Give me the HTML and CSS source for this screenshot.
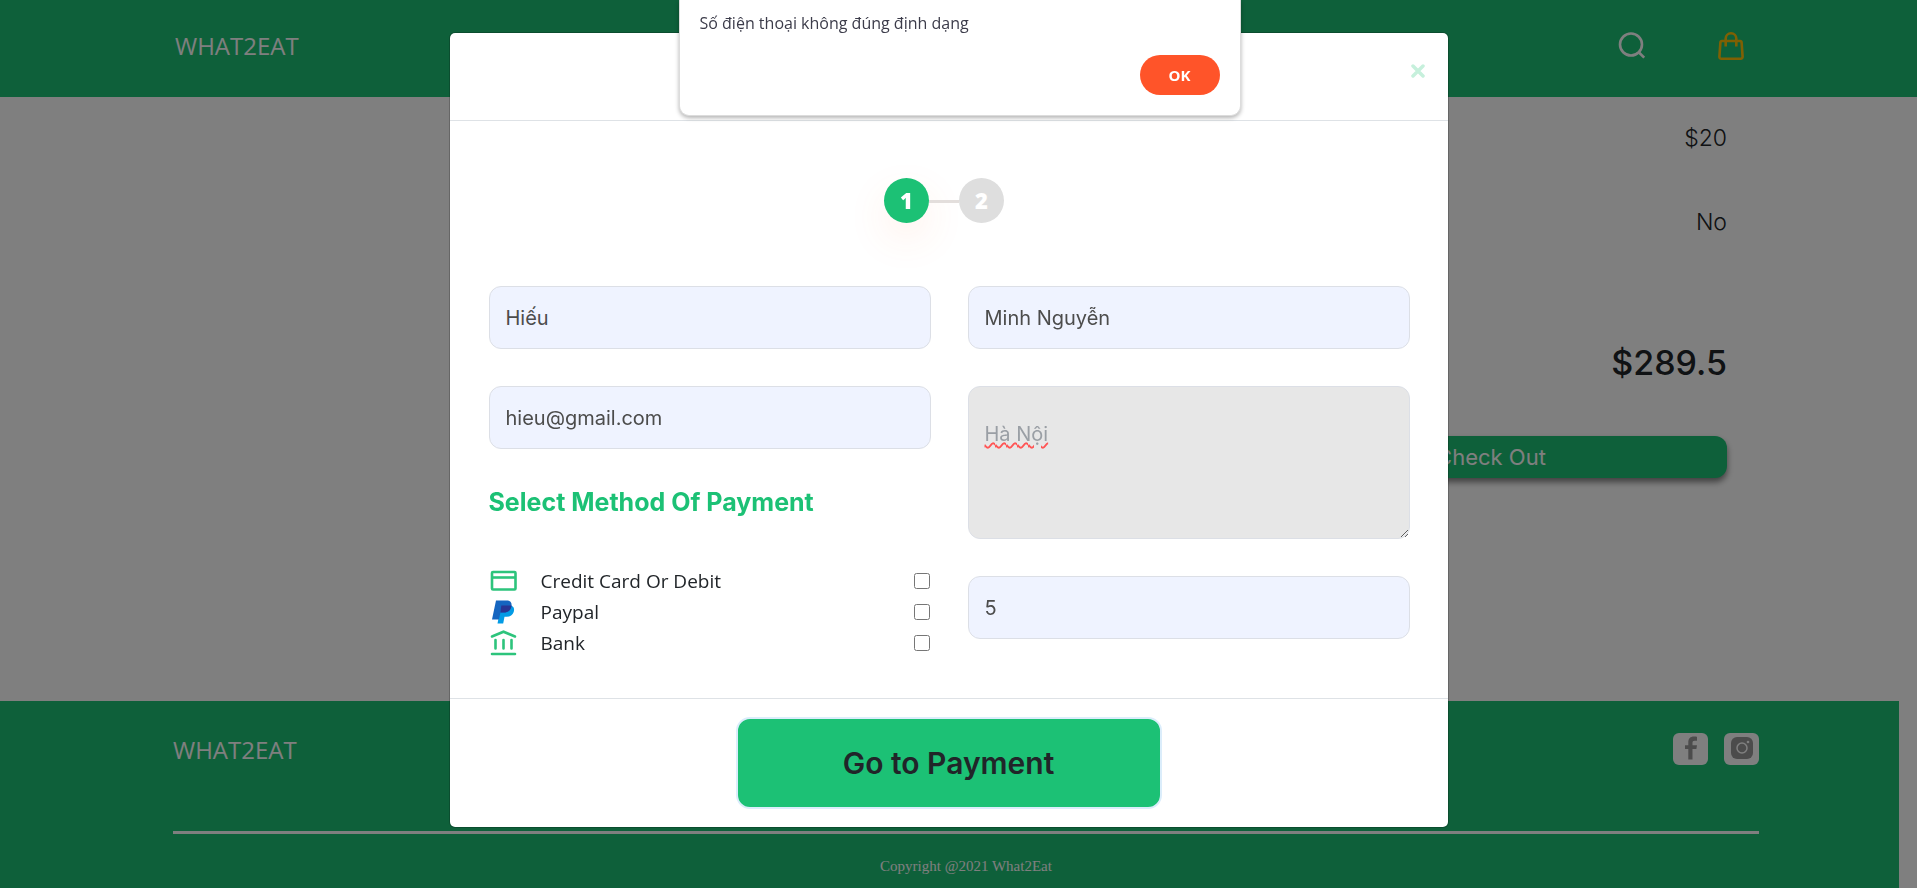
FILE: index.html
```html
<!DOCTYPE html>
<html lang="vi">
<head>
<meta charset="utf-8">
<meta name="viewport" content="width=device-width, initial-scale=1">
<title>WHAT2EAT</title>
<link rel="stylesheet" href="styles.css">
</head>
<body>
<header class="site-header">
  <a class="brand" href="#">WHAT2EAT</a>
  <nav class="site-actions" aria-label="Site">
    <button class="icon-button" type="button" aria-label="Search">
      <svg width="28" height="28" viewBox="0 0 28 28" fill="none" stroke="currentColor" stroke-width="2.600"><circle cx="13" cy="12.500" r="11"/><path d="M20.500 20l5.700 5.700"/></svg>
    </button>
    <button class="icon-button icon-button-cart" type="button" aria-label="Cart">
      <svg width="26" height="28" viewBox="0 0 26 28" fill="none" stroke="currentColor" stroke-width="2.600" stroke-linejoin="round"><path d="M4 9h18a1.600 1.600 0 0 1 1.600 1.500l1 14.200a1.900 1.900 0 0 1-1.900 2H3.300a1.900 1.900 0 0 1-1.900-2l1-14.200A1.600 1.600 0 0 1 4 9z"/><path d="M7.700 14.500V6.600a5.300 5.300 0 0 1 10.600 0v7.900"/></svg>
    </button>
  </nav>
</header>

<main class="cart">
  <section class="summary">
    <p class="summary-value">$20</p>
    <p class="summary-value">No</p>
    <p class="summary-total">$289.5</p>
    <button class="checkout" type="button">Check Out</button>
  </section>
</main>

<footer class="site-footer">
  <div class="footer-top">
    <a class="brand" href="#">WHAT2EAT</a>
    <div class="social">
      <a class="social-link" href="#" aria-label="Facebook">
        <svg width="24" height="24" viewBox="0 0 24 24" fill="currentColor"><path d="M18 .8v4h-2.300c-1.700 0-2.200.8-2.200 2.200v2.200H18l-.6 3.900h-3.900V23.500H9.300V13.100H6V9.200h3.300V6.300C9.300 2.700 11.400.6 14.800.6c1.500 0 2.700.1 3.200.2z"/></svg>
      </a>
      <a class="social-link" href="#" aria-label="Instagram">
        <svg width="24" height="24" viewBox="0 0 24 24"><rect x="1" y="1" width="22" height="22" rx="6" fill="currentColor"/><circle cx="12" cy="12" r="5" fill="none" stroke="#fff" stroke-width="1.500"/><circle cx="18" cy="6" r="1.300" fill="#fff"/></svg>
      </a>
    </div>
  </div>
  <p class="copyright">Copyright @2021 What2Eat</p>
</footer>

<div class="backdrop">
  <form class="modal" role="dialog" aria-modal="true" aria-label="Payment">
    <div class="modal-header">
      <button class="close" type="button" aria-label="Close">
        <svg width="14" height="14" viewBox="0 0 14 14" fill="none" stroke="currentColor" stroke-width="3.500" stroke-linecap="round"><path d="M2 2l10 10M12 2L2 12"/></svg>
      </button>
    </div>
    <div class="modal-body">
      <ol class="steps">
        <li class="step step-active">1</li>
        <li class="step">2</li>
      </ol>
      <div class="form-grid">
        <div class="column">
          <input class="field" type="text" value="Hiếu" aria-label="First name">
          <input class="field" type="email" value="hieu@gmail.com" aria-label="Email">
          <fieldset class="methods">
            <legend class="methods-title">Select Method Of Payment</legend>
            <label class="method">
              <svg class="method-icon" width="28" height="28" viewBox="0 0 28 28" fill="none" stroke="#2dc47c" stroke-width="2.600"><rect x="3" y="5" width="23.500" height="17.500" rx="1"/><path d="M3 10.500h23.500"/></svg>
              <span class="method-name">Credit Card Or Debit</span>
              <input class="method-check" type="checkbox">
            </label>
            <label class="method">
              <svg class="method-icon" width="28" height="28" viewBox="0 0 28 28"><path fill="#039be5" d="M22 7.500c3.200 1.200 3.600 3.800 2.700 6.500-1 3.200-3.600 4.700-7 4.700h-2.200L14.200 25.500H8.500L12 8z"/><path fill="#1565c0" d="M7 2.500h10.500c3.500 0 5.600 1.800 5 5.500-.7 4.300-3.500 6.500-7.700 6.500h-3.300L9.900 21.500H3z"/><path fill="#283593" d="M12.300 7.500h10.200c-.4 4.600-3.300 7-7.700 7h-3.300z"/></svg>
              <span class="method-name">Paypal</span>
              <input class="method-check" type="checkbox">
            </label>
            <label class="method">
              <svg class="method-icon" width="28" height="28" viewBox="0 0 28 28" fill="none" stroke="#2dc47c" stroke-width="2.600" stroke-linecap="round"><path d="M3 7.500l11.500-4.800L26 7.500M6.500 11v8.500M14.500 11v8.500M22.500 11v8.500M3 25h23"/></svg>
              <span class="method-name">Bank</span>
              <input class="method-check" type="checkbox">
            </label>
          </fieldset>
        </div>
        <div class="column">
          <input class="field" type="text" value="Minh Nguyễn" aria-label="Last name">
          <textarea class="field field-area" aria-label="Address">Hà Nội</textarea>
          <input class="field" type="text" value="5" aria-label="Phone number">
        </div>
      </div>
    </div>
    <div class="modal-footer">
      <button class="submit" type="submit">Go to Payment</button>
    </div>
  </form>
</div>

<div class="alert" role="alertdialog" aria-labelledby="alert-text">
  <p class="alert-text" id="alert-text">Số điện thoại không đúng định dạng</p>
  <button class="alert-ok" type="button">OK</button>
</div>
</body>
</html>
```

FILE: styles.css
```css
:root {
  --green: #1cc175;
  --ui: "Open Sans", "Noto Sans", sans-serif;
  --display: Inter, "Noto Sans", sans-serif;
}

* {
  box-sizing: border-box;
}

body {
  margin: 0;
  min-height: 100vh;
  display: flex;
  flex-direction: column;
  background: #fff;
  color: #212529;
  font-family: var(--ui);
}

p,
ol {
  margin: 0;
  padding: 0;
}

button {
  border: 0;
  padding: 0;
  font: inherit;
  cursor: pointer;
}

svg {
  display: block;
}

.brand {
  color: #fff;
  font-size: 24px;
  line-height: 34px;
  text-decoration: none;
}

/* Site header */
.site-header {
  display: flex;
  align-items: center;
  justify-content: space-between;
  height: 97px;
  padding: 0 173px 6px 175px;
  background: var(--green);
}

.site-actions {
  display: flex;
  gap: 72px;
}

.icon-button {
  background: none;
  color: #fff;
}

.icon-button-cart {
  color: #ffc107;
}

/* Cart summary */
.cart {
  flex: 1;
  display: flex;
  justify-content: flex-end;
  padding: 25px 190px;
}

.summary {
  display: flex;
  flex-direction: column;
  width: 472px;
  text-align: right;
  font-family: var(--display);
}

.summary-value {
  margin-bottom: 52px;
  font-size: 23px;
  font-weight: 300;
  line-height: 32px;
}

.summary-total {
  margin: 49px 0;
  font-size: 34px;
  font-weight: 500;
  line-height: 48px;
}

.checkout {
  height: 42px;
  border-radius: 12px;
  background: var(--green);
  box-shadow: 0 4px 6px rgba(0, 0, 0, 0.5);
  color: #fff;
  font-size: 22px;
}

/* Site footer */
.site-footer {
  margin-right: 18px;
  padding: 32px 140px 10px 173px;
  background: var(--green);
}

.footer-top {
  display: flex;
  justify-content: space-between;
  align-items: flex-start;
  height: 101px;
  border-bottom: 3px solid #fff;
}

.social {
  display: flex;
  gap: 16px;
}

.social-link {
  display: flex;
  justify-content: center;
  width: 35px;
  height: 32px;
  padding-top: 3px;
  border-radius: 6px;
  background: #fff;
  color: #999;
}

.copyright {
  padding-top: 20px;
  color: #fff;
  font-family: "Liberation Serif", serif;
  font-size: 15px;
  line-height: 24px;
  text-align: center;
}

/* Payment dialog */
.backdrop {
  position: fixed;
  inset: 0;
  padding: 32px 20px 0 0;
  background: rgba(0, 0, 0, 0.5);
  overflow: auto;
}

.modal {
  width: 100%;
  max-width: 1000px;
  margin: 0 auto;
  border: 1px solid rgba(0, 0, 0, 0.2);
  border-radius: 6px;
  background: #fff;
  background-clip: padding-box;
}

.modal-header {
  display: flex;
  justify-content: flex-end;
  height: 88px;
  padding: 31px 23px;
  border-bottom: 1px solid #dee2e6;
}

.close {
  height: 14px;
  background: none;
  color: #c6f0dc;
}

.modal-body {
  padding: 57px 38px 40px 39px;
}

.steps {
  display: flex;
  justify-content: center;
  gap: 30px;
  padding-right: 10px;
  list-style: none;
}

.step {
  position: relative;
  width: 45px;
  border-radius: 50%;
  background: #dedede;
  color: #fff;
  font-size: 22px;
  font-weight: 800;
  line-height: 45px;
  text-align: center;
}

.step-active {
  background: var(--green);
  box-shadow: 0 16px 40px rgba(255, 110, 50, 0.1);
}

.step + .step::before {
  content: "";
  position: absolute;
  top: 22px;
  right: 100%;
  width: 30px;
  height: 3px;
  background: #e3dedc;
}

.form-grid {
  display: grid;
  grid-template-columns: 1fr 1fr;
  gap: 37px;
  padding-top: 63px;
}

.column {
  display: flex;
  flex-direction: column;
  gap: 37px;
}

.field {
  width: 100%;
  height: 63px;
  padding: 0 16px;
  border: 1px solid #dcdfe6;
  border-radius: 12px;
  background: #eff3ff;
  color: #4c4c4c;
  font-family: var(--display);
  font-size: 20px;
}

.field-area {
  height: 153px;
  padding: 32px 16px;
  background: #e7e7e7;
  color: #9a9fa5;
  line-height: 30px;
  resize: vertical;
  text-decoration: underline wavy #f55 2px;
}

.methods {
  min-width: 0;
  margin: 0;
  padding: 0;
  border: 0;
}

.methods-title {
  padding: 0 0 47px;
  color: var(--green);
  font-family: var(--display);
  font-size: 25px;
  font-weight: 700;
  line-height: 32px;
}

.method {
  display: flex;
  align-items: center;
  height: 31px;
}

.method-icon {
  margin-right: 24px;
}

.method-name {
  flex: 1;
  font-size: 19px;
  line-height: 30px;
}

.method-check {
  width: 16px;
  height: 16px;
  margin: 0 1px;
}

.modal-footer {
  display: flex;
  justify-content: center;
  padding: 18px;
  border-top: 1px solid #dee2e6;
}

.submit {
  width: 426px;
  height: 92px;
  border: 2px solid #dbedfb;
  border-radius: 14px;
  background: var(--green);
  color: #212529;
  font-family: var(--display);
  font-size: 30px;
  font-weight: 600;
}

/* Browser alert */
.alert {
  position: fixed;
  top: 0;
  left: 50%;
  display: flex;
  flex-direction: column;
  align-items: flex-end;
  width: 562px;
  margin-left: -280px;
  padding: 11px 20px 20px;
  border: 1px solid #dcdcdc;
  border-top: 0;
  border-radius: 0 0 10px 10px;
  background: #fff;
  box-shadow: 0 2px 4px rgba(0, 0, 0, 0.3);
}

.alert-text {
  width: 100%;
  margin-bottom: 20px;
  color: #3c3c4a;
  font-size: 16px;
  line-height: 24px;
}

.alert-ok {
  width: 80px;
  height: 40px;
  border-radius: 20px;
  background: #ff5429;
  color: #fff;
  font-size: 15px;
  font-weight: 700;
}
```
